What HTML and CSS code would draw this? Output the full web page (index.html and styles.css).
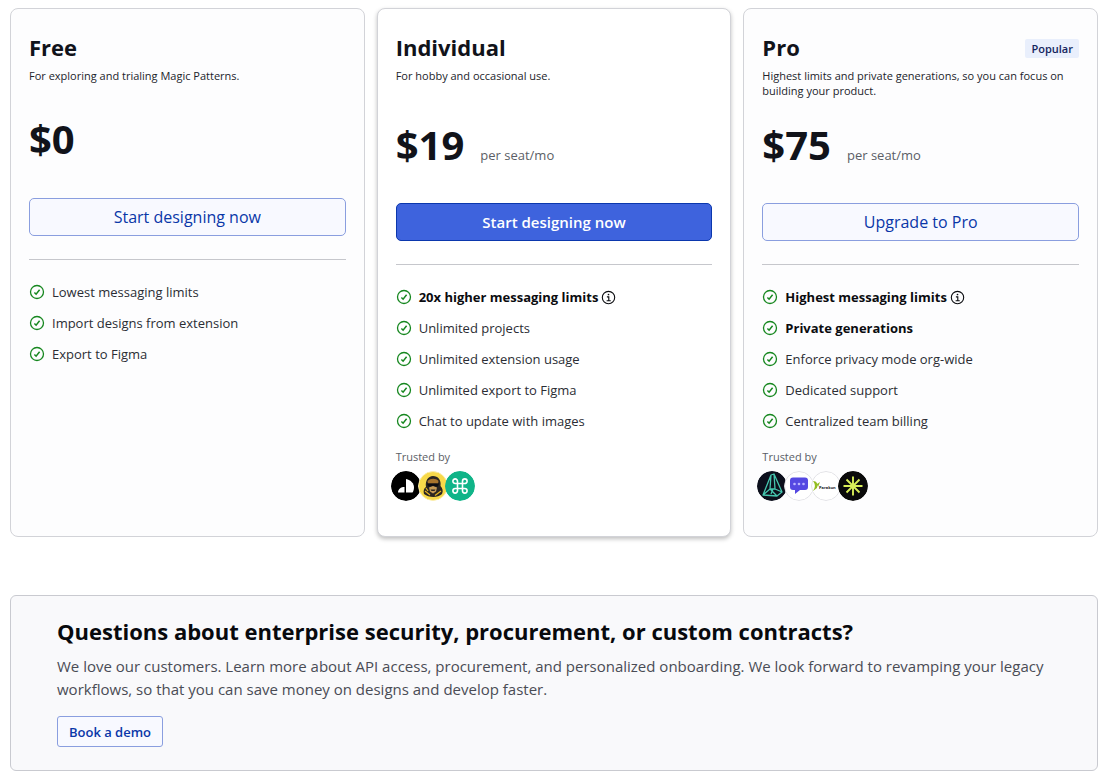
FILE: index.html
```html
<!DOCTYPE html>
<html lang="en">
	<head>
		<meta charset="utf-8" />
		<meta name="viewport" content="width=device-width, initial-scale=1" />
		<title>Pricing</title>
		<link rel="stylesheet" href="styles.css">
	</head>
	<body>
		<svg class="defs" width="0" height="0" aria-hidden="true">
			<symbol id="check" viewBox="0 0 16 16">
				<circle cx="8" cy="8" r="6.5" fill="none" stroke="currentColor" stroke-width="1.3"/>
				<path d="M5.400 8.500l1.700 1.700 3.500-4.500" fill="none" stroke="currentColor" stroke-width="1.500"/>
			</symbol>
			<symbol id="info" viewBox="0 0 16 16">
				<circle cx="8" cy="8" r="6.6" fill="none" stroke="currentColor" stroke-width="1.2"/>
				<path d="M6.3 7.3h2v4M6 11.4h4.4" fill="none" stroke="currentColor" stroke-width="1.2"/>
				<circle cx="8" cy="4.8" r="0.9" fill="currentColor"/>
			</symbol>
		</svg>
		<main class="page">
			<div class="plans">
				<section class="plan">
					<div class="plan_head">
						<h2>Free</h2>
					</div>
					<p class="desc">For exploring and trialing Magic Patterns.</p>
					<div class="price price_free"><strong>$0</strong></div>
					<button type="button" class="btn">Start designing now</button>
					<hr>
					<ul class="features">
						<li><svg class="check"><use href="#check"/></svg>Lowest messaging limits</li>
						<li><svg class="check"><use href="#check"/></svg>Import designs from extension</li>
						<li><svg class="check"><use href="#check"/></svg>Export to Figma</li>
					</ul>
				</section>

				<section class="plan plan_raised">
					<div class="plan_head">
						<h2>Individual</h2>
					</div>
					<p class="desc">For hobby and occasional use.</p>
					<div class="price"><strong>$19</strong><span>per seat/mo</span></div>
					<button type="button" class="btn btn_primary">Start designing now</button>
					<hr>
					<ul class="features">
						<li class="strong"><svg class="check"><use href="#check"/></svg>20x higher messaging limits<svg class="info"><use href="#info"/></svg></li>
						<li><svg class="check"><use href="#check"/></svg>Unlimited projects</li>
						<li><svg class="check"><use href="#check"/></svg>Unlimited extension usage</li>
						<li><svg class="check"><use href="#check"/></svg>Unlimited export to Figma</li>
						<li><svg class="check"><use href="#check"/></svg>Chat to update with images</li>
					</ul>
					<p class="trusted">Trusted by</p>
					<div class="logos">
						<svg class="logo" viewBox="0 0 30 30">
							<circle cx="15" cy="15" r="15" fill="#000"/>
							<path d="M15 8c5 1 8 4.500 8 8.500 0 2-.6 3.600-1.500 5H15z" fill="#fff"/>
							<path d="M7 21.500c0-3.500 3-5.500 6.500-5.500v5.500z" fill="#fff"/>
						</svg>
						<svg class="logo" viewBox="0 0 30 30">
							<circle cx="15" cy="15" r="14.500" fill="#f7d94a" stroke="#fbeeb0"/>
							<path d="M6 23c-1-3 0-6 2-7-1-6 2-11 7-11s8.500 4 7.500 10c2 2 3 5 1.500 8-4 4-13 4-18 0z" fill="#2b2622"/>
							<path d="M9.500 10c3-3 8.500-3 11 0l-.5 2.500H10z" fill="#a8742c"/>
							<path d="M9 12.500h12l-1 3h-4l-1-1-1 1h-4z" fill="#0d0d12"/>
							<path d="M11 16.500l4-1.500 4 1.500-1 4-3 2-3-2z" fill="#c69a55"/>
							<path d="M12.500 18.500h5l-1 1.500h-3z" fill="#2b2622"/>
							<path d="M7 20l5 4M23 20l-6 4.500M8 17l2 3" stroke="#e4b321" stroke-width="1.200" fill="none"/>
						</svg>
						<svg class="logo" viewBox="0 0 30 30">
							<circle cx="15" cy="15" r="15" fill="#10b488"/>
							<path d="M12.500 12.500h5v5h-5zM12.500 12.500H10.300A2.300 2.300 0 1 1 12.500 10.200zM17.500 12.500v-2.300a2.300 2.300 0 1 1 2.300 2.300zM17.500 17.500h2.300a2.300 2.300 0 1 1-2.300 2.300zM12.500 17.500v2.300a2.300 2.300 0 1 1-2.300-2.300z" fill="none" stroke="#fff" stroke-width="1.600"/>
						</svg>
					</div>
				</section>

				<section class="plan">
					<div class="plan_head">
						<h2>Pro</h2>
						<span class="badge">Popular</span>
					</div>
					<p class="desc">Highest limits and private generations, so you can focus on building your product.</p>
					<div class="price"><strong>$75</strong><span>per seat/mo</span></div>
					<button type="button" class="btn">Upgrade to Pro</button>
					<hr>
					<ul class="features">
						<li class="strong"><svg class="check"><use href="#check"/></svg>Highest messaging limits<svg class="info"><use href="#info"/></svg></li>
						<li class="strong"><svg class="check"><use href="#check"/></svg>Private generations</li>
						<li><svg class="check"><use href="#check"/></svg>Enforce privacy mode org-wide</li>
						<li><svg class="check"><use href="#check"/></svg>Dedicated support</li>
						<li><svg class="check"><use href="#check"/></svg>Centralized team billing</li>
					</ul>
					<p class="trusted">Trusted by</p>
					<div class="logos">
						<svg class="logo" viewBox="0 0 30 30">
							<circle cx="15" cy="15" r="15" fill="#0c0f1c"/>
							<path d="M14 4l3-1 8 18-5 4-14-1zM14 4l-1 14-7 6M17 3l1 15 7 3M13 18l7 7M13 18l5 0M14 23l2-5" fill="none" stroke="#45c4ad" stroke-width="1.300" stroke-linejoin="round"/>
						</svg>
						<svg class="logo" viewBox="0 0 30 30">
							<circle cx="15" cy="15" r="14.500" fill="#fff" stroke="#e2e2e6"/>
							<path d="M9 6.500h12a3 3 0 0 1 3 3v6.500a3 3 0 0 1-3 3h-5l-5 4V19H9a3 3 0 0 1-3-3V9.500a3 3 0 0 1 3-3z" fill="#5548e2"/>
							<g fill="#bab4ff"><circle cx="10.500" cy="13" r="1.300"/><circle cx="15" cy="13" r="1.300"/><circle cx="19.500" cy="13" r="1.300"/></g>
						</svg>
						<svg class="logo" viewBox="0 0 30 30">
							<circle cx="15" cy="15" r="14.500" fill="#fff" stroke="#e2e2e6"/>
							<path d="M2 10c4 0 5 3 4 7l-4 3c2-3 3-6 0-10zM6 13l3-2-2 5z" fill="#93bd20"/>
							<text x="8" y="18" class="logo_text">Parakon</text>
						</svg>
						<svg class="logo" viewBox="0 0 30 30">
							<circle cx="15" cy="15" r="15" fill="#0a0a0a"/>
							<path d="M15 5.500v19M5.500 15h19M8.500 8.500l13 13M21.500 8.500l-13 13" stroke="#d8ee58" stroke-width="1.900"/>
						</svg>
					</div>
				</section>
			</div>

			<section class="enterprise">
				<h2>Questions about enterprise security, procurement, or custom contracts?</h2>
				<p>We love our customers. Learn more about API access, procurement, and personalized onboarding. We look forward to revamping your legacy workflows, so that you can save money on designs and develop faster.</p>
				<button type="button" class="btn btn_small">Book a demo</button>
			</section>
		</main>
	</body>
</html>
```
FILE: styles.css
```css
body,h2,p,ul,li{padding:0;margin:0;}
body{font-family:"Segoe UI","Open Sans","Noto Sans",sans-serif;background:#fff;color:#11131a;}
*{box-sizing:border-box;}
li{list-style:none;}
svg{flex:none;}
.defs{position:absolute;}
.page{padding:8px 10px;}

/* plans */
.plans{display:grid;grid-template-columns:repeat(3,1fr);gap:12px;}
.plan{border:1px solid #d2d3d8;border-radius:8px;padding:23px 18px 35px;background:#fdfdfe;}
.plan_raised{background:#fff;box-shadow:0 2px 4px rgba(0,0,0,.25);}
.plan_head{display:flex;align-items:center;justify-content:space-between;height:32px;}
.plan h2{font-size:22px;line-height:30px;font-weight:700;padding-bottom:2px;}
.badge{background:#e9effc;color:#14245c;font-size:11px;line-height:19px;font-weight:600;padding:0 6px;border-radius:2px;}
.desc{font-size:11px;line-height:15px;min-height:30px;margin-top:4px;color:#22242b;}
.price{display:flex;align-items:baseline;gap:16px;height:59px;margin-top:20px;line-height:54px;}
.price_free{height:54px;line-height:42px;}
.price strong{font-size:40px;font-weight:700;}
.price span{font-size:13px;color:#5b5e66;}
.btn{display:block;width:100%;height:38px;margin-top:26px;padding:0;font-family:inherit;font-size:16px;font-weight:500;color:#0a37a8;background:#f8f9ff;border:1px solid #8a9edf;border-radius:5px;cursor:pointer;}
.btn_primary{color:#fff;background:#3e63dd;border-color:#0b37ad;font-size:15px;font-weight:600;}
.plan hr{border:0;border-top:1px solid #c6c7cc;margin:23px 0 0;}
.features{display:grid;gap:11px;margin-top:22px;}
.features li{display:flex;align-items:center;font-size:13px;line-height:20px;color:#2b2d34;}
.features .strong{font-weight:700;color:#0b0c10;}
.check{width:16px;height:16px;color:#16871f;margin-right:7px;}
.info{width:15px;height:15px;margin-left:3px;}
.trusted{font-size:11px;line-height:16px;color:#5b5e66;margin-top:18px;}
.logos{display:flex;margin:6px 0 0 -5px;}
.logo{width:30px;height:30px;border-radius:50%;}
.logo + .logo{margin-left:-3px;}
.logo_text{font-size:4px;font-weight:700;fill:#15181c;}

/* enterprise */
.enterprise{margin-top:58px;border:1px solid #c9cad0;border-radius:6px;padding:18px 46px 23px;background:#f9f9fb;}
.enterprise h2{font-size:22px;line-height:34px;font-weight:700;color:#08090d;}
.enterprise p{font-size:15px;line-height:23px;margin-top:7px;color:#4a4c55;}
.btn_small{width:106px;height:31px;margin-top:15px;font-size:13px;font-weight:600;border-radius:3px;}
```
